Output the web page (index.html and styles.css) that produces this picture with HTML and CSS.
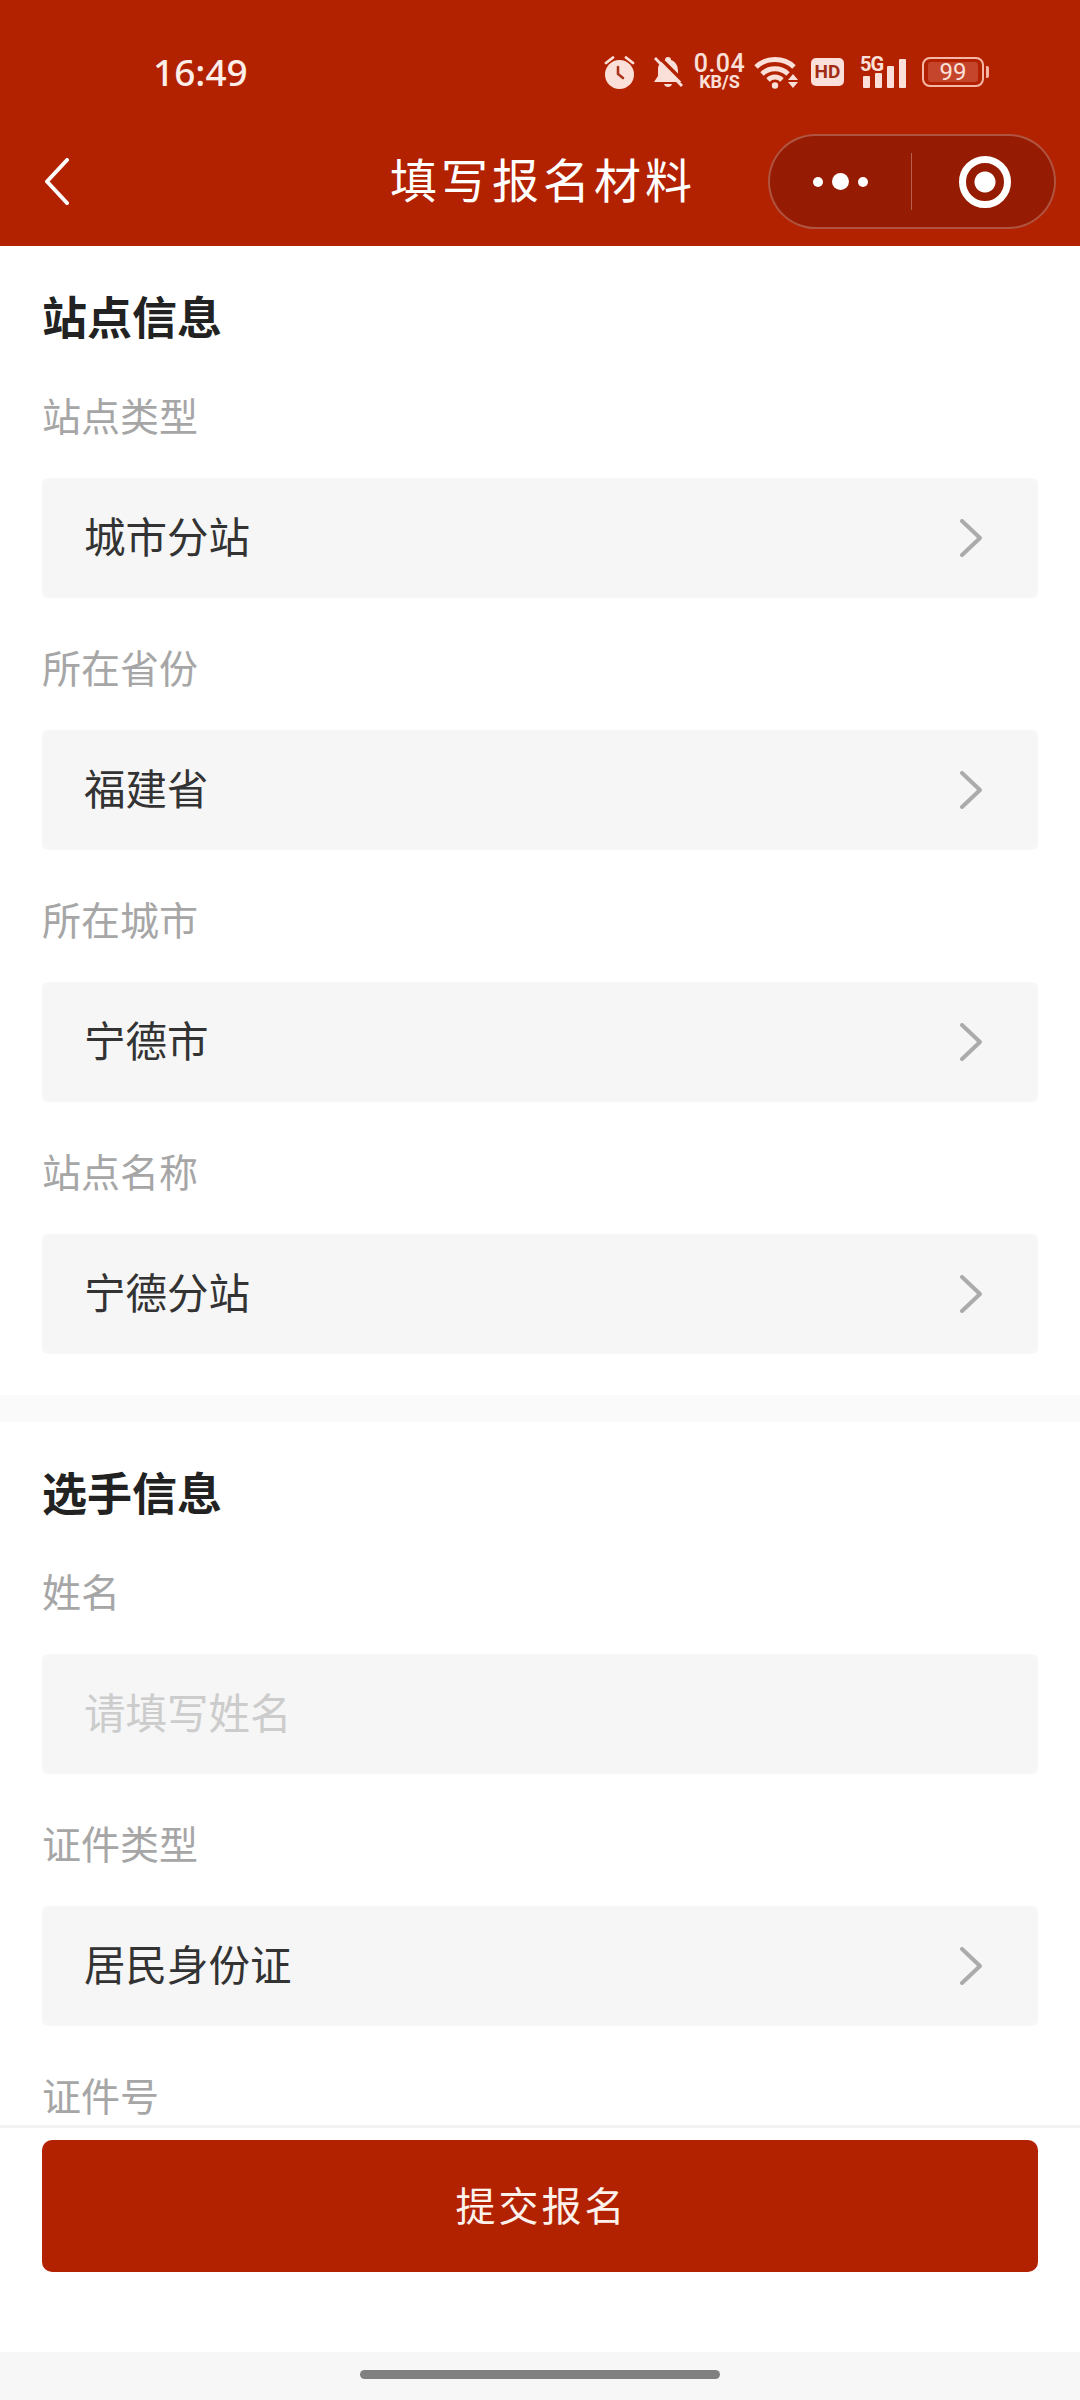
FILE: index.html
```html
<!DOCTYPE html>
<html lang="zh-CN">
<head>
  <meta charset="UTF-8" />
  <meta name="viewport" content="width=device-width, initial-scale=1.0"/>
  <title>填写报名材料</title>
  <link rel="stylesheet" href="styles.css">
</head>
<body>

<div class="page">
  <header class="top-bar">
    <div class="status-bar">
      <span class="status-time">16:49</span>
      <div class="status-icons">
        <svg class="icon-alarm" width="31" height="33" viewBox="0 0 31 33">
          <circle cx="15.5" cy="18.5" r="14.5" fill="#fbe0d9"/>
          <path d="M2 7 L9 1.5 M29 7 L22 1.5" stroke="#fbe0d9" stroke-width="2.8" stroke-linecap="round"/>
          <path d="M14 11 V18 L19 22" fill="none" stroke="#a8321a" stroke-width="2.6" stroke-linecap="round"/>
        </svg>
        <svg class="icon-bell" width="30" height="33" viewBox="0 0 30 33">
          <path d="M15 1 C17 1 18 2 18 4 C23 6 25 10 25 15 V20 L29 26 H1 L5 20 V13 C5 9 8 5 12 4 C12 2 13 1 15 1 Z" fill="#fbe0d9"/>
          <path d="M11 28 H19 C18 32 12 32 11 28 Z" fill="#fbe0d9"/>
          <path d="M5 0 L32 27" stroke="#b32200" stroke-width="3.4"/>
          <path d="M2 2 L29 30" stroke="#fbe0d9" stroke-width="2.8"/>
        </svg>
        <div class="net-speed">
          <span class="net-speed-value">0.04</span>
          <span class="net-speed-unit">KB/S</span>
        </div>
        <svg class="icon-wifi" width="45" height="33" viewBox="0 0 45 33">
          <path d="M2 11 C12 1 30 1 40 11" fill="none" stroke="#fbe0d9" stroke-width="4.8"/>
          <path d="M8 18 C15 11 27 11 34 18" fill="none" stroke="#fbe0d9" stroke-width="4.8"/>
          <path d="M14 24 C18 20 24 20 28 24" fill="none" stroke="#fbe0d9" stroke-width="4.8"/>
          <circle cx="21" cy="29.5" r="3.2" fill="#fbe0d9"/>
          <path d="M39 18 L44 24 H34 Z M34 26 H44 L39 32 Z" fill="#fbe0d9"/>
        </svg>
        <span class="hd-badge">HD</span>
        <div class="signal">
          <span class="signal-label">5G</span>
          <svg class="signal-bars" width="46" height="33" viewBox="0 0 46 33">
            <rect x="3" y="20" width="7" height="12" rx="1" fill="#fbe0d9"/>
            <rect x="15" y="17" width="7" height="15" rx="1" fill="#fbe0d9"/>
            <rect x="27" y="10" width="7" height="22" rx="1" fill="#fbe0d9"/>
            <rect x="39" y="3" width="7" height="29" rx="1" fill="#fbe0d9"/>
          </svg>
        </div>
        <div class="battery">
          <div class="battery-body"><span class="battery-level">99</span></div>
          <span class="battery-cap"></span>
        </div>
      </div>
    </div>

    <nav class="nav-bar">
      <svg class="nav-back" width="25" height="47" viewBox="0 0 25 47">
        <path d="M23 2 L3 23.5 L23 45" fill="none" stroke="#fff" stroke-width="4" stroke-linecap="round" stroke-linejoin="round"/>
      </svg>
      <h1 class="nav-title">填写报名材料</h1>
      <div class="capsule">
        <div class="capsule-more">
          <span class="dot"></span><span class="dot dot-big"></span><span class="dot"></span>
        </div>
        <span class="capsule-line"></span>
        <div class="capsule-close"><span class="close-ring"></span></div>
      </div>
    </nav>
  </header>

  <main class="form-scroll">
    <section class="form-section">
      <h2 class="section-title">站点信息</h2>
      <div class="form-item">
        <label class="item-label">站点类型</label>
        <div class="item-field">
          <span class="field-value">城市分站</span>
          <svg class="chevron" width="22" height="38" viewBox="0 0 22 38"><path d="M2 2 L20 19 L2 36" fill="none" stroke="#ababab" stroke-width="4" stroke-linecap="round" stroke-linejoin="round"/></svg>
        </div>
      </div>
      <div class="form-item">
        <label class="item-label">所在省份</label>
        <div class="item-field">
          <span class="field-value">福建省</span>
          <svg class="chevron" width="22" height="38" viewBox="0 0 22 38"><path d="M2 2 L20 19 L2 36" fill="none" stroke="#ababab" stroke-width="4" stroke-linecap="round" stroke-linejoin="round"/></svg>
        </div>
      </div>
      <div class="form-item">
        <label class="item-label">所在城市</label>
        <div class="item-field">
          <span class="field-value">宁德市</span>
          <svg class="chevron" width="22" height="38" viewBox="0 0 22 38"><path d="M2 2 L20 19 L2 36" fill="none" stroke="#ababab" stroke-width="4" stroke-linecap="round" stroke-linejoin="round"/></svg>
        </div>
      </div>
      <div class="form-item">
        <label class="item-label">站点名称</label>
        <div class="item-field">
          <span class="field-value">宁德分站</span>
          <svg class="chevron" width="22" height="38" viewBox="0 0 22 38"><path d="M2 2 L20 19 L2 36" fill="none" stroke="#ababab" stroke-width="4" stroke-linecap="round" stroke-linejoin="round"/></svg>
        </div>
      </div>
    </section>

    <div class="section-gap"></div>

    <section class="form-section">
      <h2 class="section-title">选手信息</h2>
      <div class="form-item">
        <label class="item-label">姓名</label>
        <div class="item-field">
          <span class="field-placeholder">请填写姓名</span>
        </div>
      </div>
      <div class="form-item">
        <label class="item-label">证件类型</label>
        <div class="item-field">
          <span class="field-value">居民身份证</span>
          <svg class="chevron" width="22" height="38" viewBox="0 0 22 38"><path d="M2 2 L20 19 L2 36" fill="none" stroke="#ababab" stroke-width="4" stroke-linecap="round" stroke-linejoin="round"/></svg>
        </div>
      </div>
      <div class="form-item">
        <label class="item-label">证件号</label>
      </div>
    </section>
  </main>

  <footer class="submit-bar">
    <button class="submit-button">提交报名</button>
  </footer>

  <div class="home-bar"><span class="home-indicator"></span></div>
</div>

</body>
</html>
```

FILE: styles.css
```css
body {
  font-family: 'Noto Sans CJK SC', 'Noto Sans', sans-serif;
  margin: 0;
  padding: 0;
  background-color: #fff;
  color: #333;
}

.page {
  display: flex;
  flex-direction: column;
  height: 2400px;
  overflow: hidden;
}

/* header */
.top-bar {
  flex: 0 0 246px;
  background-color: #b32200;
  color: #fff;
}

.status-bar {
  display: flex;
  align-items: center;
  justify-content: space-between;
  height: 124px;
  padding: 10px 91px 0 153px;
}

.status-time {
  margin-bottom: 2px;
  font-family: 'Noto Sans', sans-serif;
  font-size: 37px;
  font-weight: 500;
  color: #fdeee9;
}

.status-icons {
  display: flex;
  align-items: center;
  color: #fbe0d9;
}

.icon-bell {
  margin-left: 18px;
}

.net-speed {
  display: flex;
  flex-direction: column;
  align-items: center;
  width: 51px;
  margin-left: 11px;
  font-family: 'Roboto', sans-serif;
  font-weight: 500;
}

.net-speed-value {
  font-size: 25px;
  line-height: 20px;
  letter-spacing: 0.5px;
}

.net-speed-unit {
  font-size: 18px;
  font-weight: 700;
  line-height: 16px;
}

.icon-wifi {
  margin-left: 9px;
}

.hd-badge {
  width: 33px;
  height: 28px;
  margin-left: 12px;
  background-color: #fbe0d9;
  border-radius: 5px;
  color: #a12c15;
  font-family: 'Roboto', sans-serif;
  font-size: 19px;
  font-weight: 700;
  line-height: 28px;
  text-align: center;
}

/* 5G sits in the notch above the two short bars */
.signal {
  position: relative;
  width: 46px;
  height: 33px;
  margin-left: 16px;
}

.signal-bars {
  display: block;
}

.signal-label {
  position: absolute;
  top: -1px;
  left: 0;
  font-family: 'Roboto', sans-serif;
  font-size: 20px;
  font-weight: 700;
  line-height: 18px;
  letter-spacing: -1px;
}

.battery {
  display: flex;
  align-items: center;
  margin-left: 16px;
}

.battery-body {
  box-sizing: border-box;
  width: 62px;
  height: 30px;
  padding: 3px 4px;
  border: 2.5px solid #f6b7a7;
  border-radius: 8px;
}

.battery-level {
  display: block;
  height: 100%;
  background-color: #c4452c;
  border-radius: 3px;
  font-family: 'Roboto', sans-serif;
  font-size: 24px;
  line-height: 20px;
  text-align: center;
  color: #fbe0d9;
}

.battery-cap {
  width: 3px;
  height: 12px;
  margin-left: 2px;
  background-color: #f6b7a7;
  border-radius: 0 2px 2px 0;
}

.nav-bar {
  display: grid;
  grid-template-columns: 1fr auto 1fr;
  align-items: center;
  height: 95px;
  padding: 0 24px 0 30px;
}

.nav-back {
  margin-left: 14px;
}

.nav-title {
  margin: 0 0 9px;
  font-size: 47px;
  font-weight: 400;
  letter-spacing: 4px;
  color: #fff;
}

.capsule {
  justify-self: end;
  display: flex;
  align-items: center;
  box-sizing: border-box;
  width: 288px;
  height: 95px;
  background-color: #951b02;
  border: 2px solid rgba(255, 255, 255, 0.25);
  border-radius: 48px;
}

.capsule-more {
  display: flex;
  align-items: center;
  justify-content: center;
  gap: 9px;
  flex: 1;
}

.dot {
  width: 10px;
  height: 10px;
  background-color: #fff;
  border-radius: 50%;
}

.dot-big {
  width: 17px;
  height: 17px;
}

.capsule-line {
  width: 1px;
  height: 57px;
  background-color: rgba(255, 255, 255, 0.3);
}

.capsule-close {
  display: flex;
  align-items: center;
  justify-content: center;
  flex: 0 0 142px;
  padding-left: 4px;
  box-sizing: border-box;
}

.close-ring {
  display: flex;
  box-sizing: border-box;
  width: 52px;
  height: 52px;
  border: 7px solid #fff;
  border-radius: 50%;
  background: radial-gradient(circle, #fff 0 10px, transparent 11px);
}

/* form */
.form-scroll {
  flex: 1;
  overflow: hidden;
}

.form-section {
  padding: 41px 42px;
}

.section-title {
  height: 60px;
  margin: 0;
  font-size: 45px;
  font-weight: 700;
  line-height: 57px;
  color: #222;
}

.form-item {
  margin-top: 46px;
}

.section-title + .form-item {
  margin-top: 45px;
}

.item-label {
  display: block;
  height: 50px;
  font-size: 39px;
  line-height: 45px;
  color: #a6a6a6;
}

.item-field {
  display: flex;
  align-items: center;
  justify-content: space-between;
  height: 120px;
  margin-top: 36px;
  padding: 0 56px 0 42px;
  background-color: #f6f6f6;
  border-radius: 6px;
}

.field-value,
.field-placeholder {
  padding-bottom: 6px;
  font-size: 41.5px;
}

.field-value {
  color: #333;
}

.field-placeholder {
  color: #ccc;
}

.section-gap {
  height: 27px;
  background-color: #fafafa;
}

/* bottom */
.submit-bar {
  box-sizing: border-box;
  flex: 0 0 227px;
  padding: 12px 42px 0;
  background-color: #fff;
  border-top: 3px solid #f2f2f2;
}

.submit-button {
  display: block;
  width: 100%;
  height: 132px;
  padding: 0 0 5px 3px;
  border: none;
  border-radius: 10px;
  background-color: #b32200;
  color: #fdf1ec;
  font-family: inherit;
  font-size: 40px;
  letter-spacing: 3px;
}

.home-bar {
  display: flex;
  justify-content: center;
  flex: 0 0 48px;
  background-color: #f7f7f7;
}

.home-indicator {
  width: 360px;
  height: 9px;
  margin-top: 18px;
  background-color: #808080;
  border-radius: 5px;
}
```
